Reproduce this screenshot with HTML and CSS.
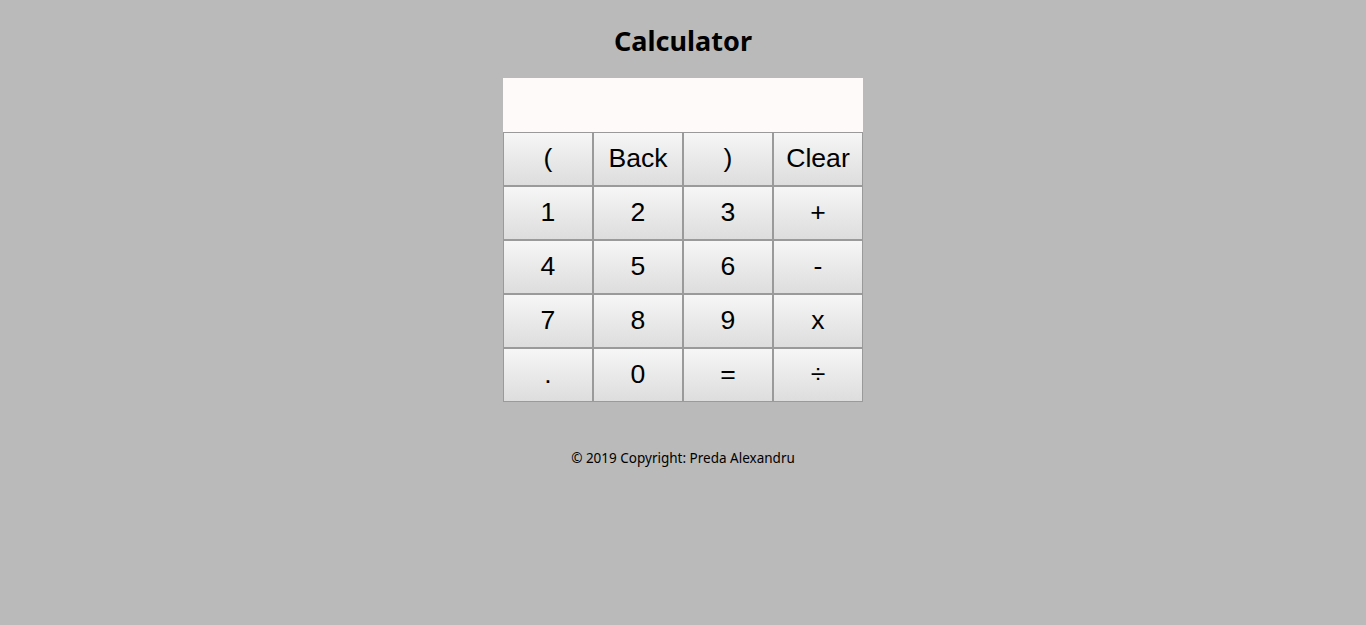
FILE: index.html
```html
<!DOCTYPE html>
<html lang="en">
<head>
<meta charset="utf-8">
<title>Calculator</title>
<link rel="stylesheet" href="styles.css">
</head>
<body>
<main class="page">
  <h1 class="title">Calculator</h1>
  <div class="calc">
    <div class="display"></div>
    <div class="keys">
      <button class="key">(</button>
      <button class="key">Back</button>
      <button class="key">)</button>
      <button class="key">Clear</button>
      <button class="key">1</button>
      <button class="key">2</button>
      <button class="key">3</button>
      <button class="key">+</button>
      <button class="key">4</button>
      <button class="key">5</button>
      <button class="key">6</button>
      <button class="key">-</button>
      <button class="key">7</button>
      <button class="key">8</button>
      <button class="key">9</button>
      <button class="key">x</button>
      <button class="key">.</button>
      <button class="key">0</button>
      <button class="key">=</button>
      <button class="key">÷</button>
    </div>
  </div>
  <footer class="footer">© 2019 Copyright: Preda Alexandru</footer>
</main>
</body>
</html>
```

FILE: styles.css
```css
html, body {
  margin: 0;
  padding: 0;
  background: #bababa;
  height: 100%;
}
.page {
  display: flex;
  flex-direction: column;
  align-items: center;
  padding-top: 22px;
  font-family: "Noto Sans", "Open Sans", sans-serif;
  color: #000;
}
.title {
  margin: 0;
  font-size: 27px;
  line-height: 38px;
  font-weight: 700;
  height: 38px;
}
.calc {
  margin-top: 18px;
  width: 360px;
  display: flex;
  flex-direction: column;
}
.display {
  height: 54px;
  background: #fffafa;
}
.keys {
  display: grid;
  grid-template-columns: repeat(4, 90px);
  grid-auto-rows: 54px;
}
.key {
  margin: 0;
  padding: 0 0 2px;
  border: 1px solid #9a9a9a;
  background: linear-gradient(#f6f6f6, #dddddd);
  font-family: "Liberation Sans", Arial, sans-serif;
  font-size: 26.6px;
  color: #000;
  display: flex;
  align-items: center;
  justify-content: center;
}
.footer {
  margin-top: 47px;
  font-size: 13.5px;
  line-height: 18px;
  color: #000;
}
```
